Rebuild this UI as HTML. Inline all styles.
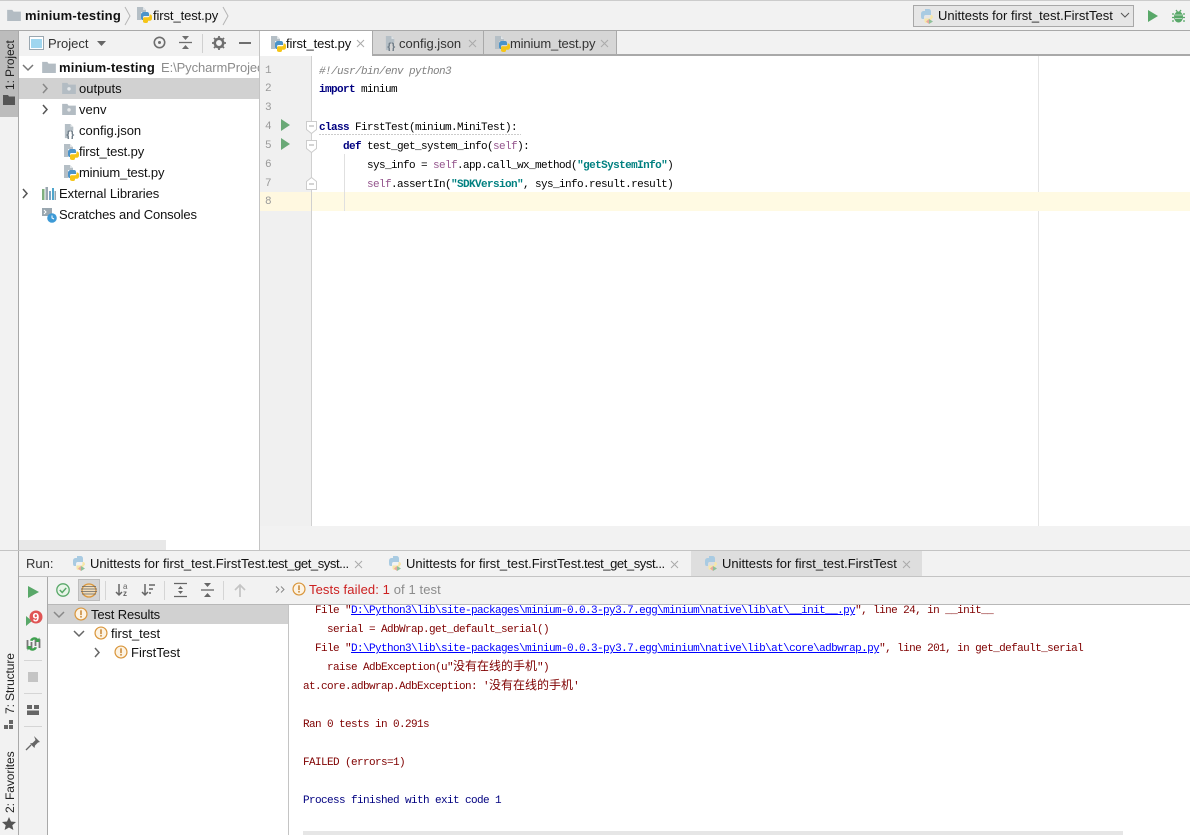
<!DOCTYPE html>
<html><head><meta charset="utf-8">
<style>
html,body{margin:0;padding:0;background:#fff}
#r{position:relative;width:1190px;height:835px;overflow:hidden;background:#fff;font-family:"Liberation Sans","Noto Sans CJK SC",sans-serif;font-size:13px;color:#111}
.b{position:absolute}
.t{position:absolute;white-space:pre;line-height:18px;height:18px}
.m{position:absolute;white-space:pre;font-family:"Liberation Mono",monospace;font-size:11px;letter-spacing:-.6px;line-height:19px;height:19px;color:#000}
.k{color:#000080;font-weight:bold}.s{color:#008080;font-weight:bold}.f{color:#94558d}.c{color:#808080;font-style:italic}
.r{color:#7f0000}.l{color:#0000ff;text-decoration:underline}.n{color:#000080}
.z{font-family:"Noto Sans CJK SC",sans-serif;font-size:12px;letter-spacing:0;line-height:0}
.g{position:absolute;left:265px;width:16px;text-align:left;font-family:"Liberation Mono",monospace;font-size:11px;color:#999;line-height:14px}
svg{position:absolute;overflow:visible}
.v{position:absolute;white-space:pre;transform-origin:0 0;transform:rotate(-90deg);line-height:14px;font-size:12px;letter-spacing:-.1px;color:#222}
.nar{letter-spacing:-.42px}
</style></head><body><div id="r">
<svg width="0" height="0" style="position:absolute"><defs>
<symbol id="py" viewBox="0 0 16 16"><path d="M1 0h6l3 3v2H5v8H1z" fill="#b5bfc6"/><path d="M7 0v3h3z" fill="#dfe4e7"/><path d="M5 8c0-2 1.200-3 3-3h3c1.500 0 2 1 2 2v2H8.500C7.500 9 7 9.500 7 10.500V13H6.500C5.500 13 5 12 5 11z" fill="#4b93c9"/><path d="M13.500 7.500h.7c1.100 0 1.800 1 1.800 2.300V11.500c0 1.500-1 2.200-2.200 2.200H12v1c0 .8-1 1.300-2.500 1.300S7 15.500 7 14.500V11.800c0-.9.600-1.500 1.500-1.500H12c1 0 1.500-.6 1.500-1.500z" fill="#f5c518"/></symbol>
<symbol id="pf" viewBox="0 0 16 16"><path d="M2 6c0-2 1-3 3-3h1V1h3.500c1.500 0 2.500 1 2.500 2.500V7H6.500C5.500 7 5 8 5 9v2H3.500C2.500 11 2 10 2 8.500z" fill="#a9cbe2"/><path d="M14 9.500c0-1.200-.5-2.500-2-2.500h-.5v2c0 1-.8 1.500-1.500 1.500H5.500V13c0 1.500 1 2 2.500 2h1.500" fill="#f7e7a8"/><path d="M10 11l4 2.500-4 2.500z" fill="#8fc09a"/><path d="M10 11l-3 2.500 3 2.500z" fill="#e8a8a0"/></symbol>
<symbol id="json" viewBox="0 0 16 16"><path d="M2 0h6l3 3v4H6v8H2z" fill="#b5bfc6"/><path d="M8 0v3h3z" fill="#dfe4e7"/><text x="3.500" y="15" font-family="Liberation Sans" font-size="11" fill="#6d7a85" font-weight="bold">{}</text></symbol>
<symbol id="ex" viewBox="0 0 16 16"><circle cx="8" cy="8" r="6.800" fill="#fdf3e3" stroke="#d9963c" stroke-width="1.400"/><rect x="7.100" y="3.800" width="1.800" height="5.500" fill="#c98a3a"/><rect x="7.100" y="10.300" width="1.800" height="1.800" fill="#c98a3a"/></symbol>
<symbol id="fold" viewBox="0 0 16 14"><path d="M0 1h6l1.500 2H16v11H0z" fill="#b3bcc3"/></symbol>
<symbol id="foldd" viewBox="0 0 16 14"><path d="M0 1h6l1.500 2H16v11H0z" fill="#b3bcc3"/><circle cx="8" cy="8" r="2" fill="#e6e9eb"/></symbol>
</defs></svg>

<!-- top bar -->
<div class="b" style="left:0;top:0;width:1190px;height:30px;background:#f2f2f2;border-top:1px solid #ccc;box-sizing:border-box"></div>
<div class="b" style="left:0;top:30px;width:1190px;height:1px;background:#a9a9a9"></div>
<svg style="left:7px;top:9px" width="14" height="12"><use href="#fold" width="14" height="12"/></svg>
<div class="t" style="left:25px;top:7px;font-weight:bold;letter-spacing:.2px">minium-testing</div>
<svg style="left:124px;top:5px" width="8" height="22"><path d="M1 2l5 9-5 9" fill="none" stroke="#b5b5b5"/></svg>
<svg style="left:136px;top:7px" width="16" height="16"><use href="#py" width="16" height="16"/></svg>
<div class="t" style="left:153px;top:7px;letter-spacing:-.1px">first_test.py</div>
<svg style="left:222px;top:5px" width="8" height="22"><path d="M1 2l5 9-5 9" fill="none" stroke="#b5b5b5"/></svg>
<div class="b" style="left:913px;top:5px;width:221px;height:22px;background:#e6e6e6;border:1px solid #a8a8a8;box-sizing:border-box"></div>
<svg style="left:919px;top:8px" width="16" height="16"><use href="#pf" width="16" height="16"/></svg>
<div class="t" style="left:938px;top:7px">Unittests for first_test.FirstTest</div>
<svg style="left:1120px;top:12px" width="10" height="7"><path d="M1 1l4 4 4-4" fill="none" stroke="#555"/></svg>
<svg style="left:1147px;top:10px" width="12" height="12"><path d="M1 0l10 6-10 6z" fill="#59a869"/></svg>
<svg style="left:1172px;top:9px" width="13" height="14"><ellipse cx="6.500" cy="8" rx="4.500" ry="5.500" fill="#59a869"/><path d="M0 5h2M11 5h2M0 8.500h2M11 8.500h2M0 12h2M11 12h2M4 1l1.500 2M9 1L7.500 3" stroke="#59a869" stroke-width="1.300"/><path d="M3 6h7M3 9.500h7" stroke="#cfe5d4" stroke-width=".8"/></svg>

<!-- left stripe -->
<div class="b" style="left:0;top:31px;width:18px;height:804px;background:#f2f2f2"></div>
<div class="b" style="left:18px;top:31px;width:1px;height:804px;background:#a9a9a9"></div>
<div class="b" style="left:0;top:31px;width:18px;height:86px;background:#bcbcbc"></div>
<div class="v" style="left:3px;top:90px">1: Project</div>
<svg style="left:3px;top:95px" width="12" height="10"><path d="M0 0h5l1 1.500h6V10H0z" fill="#555"/></svg>
<div class="v" style="left:3px;top:714px">7: Structure</div>
<svg style="left:4px;top:720px" width="10" height="10"><path d="M0 5h4v4H0zM5 5h4v4H5zM5 0h4v4H5z" fill="#666"/></svg>
<div class="v" style="left:3px;top:813px">2: Favorites</div>
<svg style="left:2px;top:817px" width="14" height="13"><path d="M7 0l2 4.500 5 .5-3.700 3.200 1.100 4.800L7 10.500 2.600 13l1.100-4.800L0 5l5-.5z" fill="#555"/></svg>

<!-- project panel -->
<div class="b" style="left:19px;top:31px;width:240px;height:25px;background:#f2f2f2"></div>
<svg style="left:29px;top:36px" width="15" height="14"><rect x=".5" y=".5" width="14" height="13" fill="#fff" stroke="#9aa7b0"/><rect x="2" y="3" width="11" height="9" fill="#9fd6ef"/></svg>
<div class="t" style="left:48px;top:35px;color:#333">Project</div>
<svg style="left:97px;top:41px" width="9" height="5"><path d="M0 0h9L4.500 5z" fill="#666"/></svg>
<svg style="left:153px;top:36px" width="13" height="13"><circle cx="6.500" cy="6.500" r="5.200" fill="none" stroke="#6e6e6e" stroke-width="1.600"/><circle cx="6.500" cy="6.500" r="1.500" fill="#6e6e6e"/></svg>
<svg style="left:179px;top:36px" width="13" height="13"><path d="M0 6.500h13" stroke="#6e6e6e" stroke-width="1.300"/><path d="M3 0h7L6.500 4zM3 13h7L6.500 9z" fill="#6e6e6e"/></svg>
<div class="b" style="left:202px;top:34px;width:1px;height:19px;background:#d0d0d0"></div>
<svg style="left:212px;top:36px" width="14" height="14"><circle cx="7" cy="7" r="4.200" fill="none" stroke="#6e6e6e" stroke-width="2.500"/><path d="M7 0v3M7 11v3M0 7h3M11 7h3M2 2l2 2M10 10l2 2M12 2l-2 2M2 12l2-2" stroke="#6e6e6e" stroke-width="1.800"/></svg>
<div class="b" style="left:239px;top:42px;width:12px;height:2px;background:#6e6e6e"></div>

<div class="b" style="left:19px;top:78px;width:240px;height:21px;background:#d1d1d1"></div>
<svg style="left:22px;top:64px" width="12" height="8"><path d="M1 1l5 5 5-5" fill="none" stroke="#777" stroke-width="1.500"/></svg>
<svg style="left:42px;top:61px" width="14" height="12"><use href="#fold" width="14" height="12"/></svg>
<div class="t" style="left:59px;top:59px;font-weight:bold;letter-spacing:.2px">minium-testing</div>
<div class="t" style="left:161px;top:59px;width:98px;overflow:hidden;color:#8c8c8c;letter-spacing:-.1px">E:\PycharmProjects\minium</div>
<svg style="left:42px;top:83px" width="7" height="11"><path d="M1 1l4 4.500-4 4.500" fill="none" stroke="#888" stroke-width="1.500"/></svg>
<svg style="left:62px;top:82px" width="14" height="12"><use href="#foldd" width="14" height="12"/></svg>
<div class="t" style="left:79px;top:80px">outputs</div>
<svg style="left:42px;top:104px" width="7" height="11"><path d="M1 1l4 4.500-4 4.500" fill="none" stroke="#555" stroke-width="1.500"/></svg>
<svg style="left:62px;top:103px" width="14" height="12"><use href="#foldd" width="14" height="12"/></svg>
<div class="t" style="left:79px;top:101px">venv</div>
<svg style="left:63px;top:124px" width="15" height="15"><use href="#json" width="15" height="15"/></svg>
<div class="t" style="left:79px;top:122px">config.json</div>
<svg style="left:63px;top:144px" width="16" height="16"><use href="#py" width="16" height="16"/></svg>
<div class="t" style="left:79px;top:143px;letter-spacing:-.1px">first_test.py</div>
<svg style="left:63px;top:165px" width="16" height="16"><use href="#py" width="16" height="16"/></svg>
<div class="t" style="left:79px;top:164px;letter-spacing:-.15px">minium_test.py</div>
<svg style="left:22px;top:188px" width="7" height="11"><path d="M1 1l4 4.500-4 4.500" fill="none" stroke="#555" stroke-width="1.500"/></svg>
<svg style="left:42px;top:187px" width="14" height="13"><path d="M0 2h2.500v11H0z" fill="#7fb07f"/><path d="M3.500 0H6v13H3.500z" fill="#9aa7b0"/><path d="M7 4h2v9H7z" fill="#7ca5c4"/><path d="M10 1h2v12h-2z" fill="#4fa5cc"/><path d="M12.500 4H14v9h-1.500z" fill="#9aa7b0"/></svg>
<div class="t" style="left:59px;top:185px;letter-spacing:-.05px">External Libraries</div>
<svg style="left:42px;top:207px" width="16" height="16"><path d="M0 1h10v8H0z" fill="#9aa7b0"/><path d="M2 3l2 2-2 2" stroke="#fff" fill="none"/><circle cx="10" cy="11" r="4.800" fill="#3d9ad6"/><path d="M10 8.500V11l2 1" stroke="#fff" fill="none"/></svg>
<div class="t" style="left:59px;top:206px;letter-spacing:-.14px">Scratches and Consoles</div>
<div class="b" style="left:19px;top:540px;width:147px;height:10px;background:#e8e8e8"></div>
<div class="b" style="left:259px;top:31px;width:1px;height:520px;background:#c4c4c4"></div>

<!-- editor tabs -->
<div class="b" style="left:260px;top:31px;width:930px;height:23px;background:#f2f2f2"></div>
<div class="b" style="left:260px;top:54px;width:930px;height:2px;background:#a9a9a9"></div>
<div class="b" style="left:260px;top:31px;width:112px;height:25px;background:#fff"></div>
<div class="b" style="left:373px;top:31px;width:110px;height:23px;background:#d6d6d6"></div>
<div class="b" style="left:484px;top:31px;width:132px;height:23px;background:#d6d6d6"></div>
<div class="b" style="left:372px;top:31px;width:1px;height:24px;background:#a9a9a9"></div>
<div class="b" style="left:483px;top:31px;width:1px;height:23px;background:#a9a9a9"></div>
<div class="b" style="left:616px;top:31px;width:1px;height:23px;background:#a9a9a9"></div>
<svg style="left:270px;top:36px" width="16" height="16"><use href="#py" width="16" height="16"/></svg>
<div class="t" style="left:286px;top:35px;letter-spacing:-.1px">first_test.py</div>
<svg style="left:356px;top:39px" width="9" height="9"><path d="M1 1l7 7M8 1l-7 7" stroke="#aaa"/></svg>
<svg style="left:384px;top:36px" width="15" height="15"><use href="#json" width="15" height="15"/></svg>
<div class="t" style="left:399px;top:35px;color:#333">config.json</div>
<svg style="left:468px;top:39px" width="9" height="9"><path d="M1 1l7 7M8 1l-7 7" stroke="#aaa"/></svg>
<svg style="left:494px;top:36px" width="16" height="16"><use href="#py" width="16" height="16"/></svg>
<div class="t" style="left:510px;top:35px;color:#333;letter-spacing:-.15px">minium_test.py</div>
<svg style="left:600px;top:39px" width="9" height="9"><path d="M1 1l7 7M8 1l-7 7" stroke="#aaa"/></svg>

<!-- editor -->
<div class="b" style="left:260px;top:56px;width:51px;height:470px;background:#f0f0f0"></div>
<div class="b" style="left:311px;top:56px;width:1px;height:470px;background:#d0d0d0"></div>
<div class="b" style="left:1038px;top:56px;width:1px;height:470px;background:#e4e4e4"></div>
<div class="b" style="left:260px;top:192px;width:51px;height:19px;background:#fff8e0"></div>
<div class="b" style="left:312px;top:192px;width:878px;height:19px;background:#fffae3"></div>
<div class="b" style="left:344px;top:154px;width:1px;height:57px;background:#e0e0e0"></div>
<div class="g" style="top:64px">1</div><div class="g" style="top:82px">2</div><div class="g" style="top:101px">3</div><div class="g" style="top:120px">4</div><div class="g" style="top:139px">5</div><div class="g" style="top:158px">6</div><div class="g" style="top:177px">7</div><div class="g" style="top:195px">8</div>
<svg style="left:281px;top:119px" width="9" height="12"><path d="M0 0l9 6-9 6z" fill="#6aa977"/></svg>
<svg style="left:281px;top:138px" width="9" height="12"><path d="M0 0l9 6-9 6z" fill="#6aa977"/></svg>
<svg style="left:306px;top:121px" width="11" height="13"><path d="M.5.5h10v8l-5 4-5-4z" fill="#fff" stroke="#ccc"/><path d="M3 5h5" stroke="#aaa"/></svg>
<svg style="left:306px;top:140px" width="11" height="13"><path d="M.5.5h10v8l-5 4-5-4z" fill="#fff" stroke="#ccc"/><path d="M3 5h5" stroke="#aaa"/></svg>
<svg style="left:306px;top:177px" width="11" height="13"><path d="M.5 12.500h10v-8l-5-4-5 4z" fill="#fff" stroke="#ccc"/><path d="M3 7h5" stroke="#aaa"/></svg>
<svg style="left:319px;top:133px" width="202" height="3"><path d="M0 1.500H202" stroke="#ccc" stroke-dasharray="2 1"/></svg>
<div class="m c" style="left:319px;top:63px">#!/usr/bin/env python3</div>
<div class="m" style="left:319px;top:81px"><span class="k">import</span> minium</div>
<div class="m" style="left:319px;top:119px"><span class="k">class</span> FirstTest(minium.MiniTest):</div>
<div class="m" style="left:343px;top:138px"><span class="k">def</span> test_get_system_info(<span class="f">self</span>):</div>
<div class="m" style="left:367px;top:157px">sys_info = <span class="f">self</span>.app.call_wx_method(<span class="s">"getSystemInfo"</span>)</div>
<div class="m" style="left:367px;top:176px"><span class="f">self</span>.assertIn(<span class="s">"SDKVersion"</span>, sys_info.result.result)</div>

<!-- strip -->
<div class="b" style="left:260px;top:526px;width:930px;height:24px;background:#f2f2f2"></div>
<div class="b" style="left:0;top:550px;width:1190px;height:1px;background:#c4c4c4"></div>

<!-- run tabs -->
<div class="b" style="left:19px;top:551px;width:1171px;height:25px;background:#f2f2f2"></div>
<div class="b" style="left:691px;top:551px;width:231px;height:25px;background:#dedede"></div>
<div class="b" style="left:19px;top:576px;width:1171px;height:1px;background:#c4c4c4"></div>
<div class="t" style="left:26px;top:555px;color:#333">Run:</div>
<svg style="left:71px;top:555px" width="16" height="16"><use href="#pf" width="16" height="16"/></svg>
<div class="t" style="left:90px;top:555px">Unittests for first_test.FirstTest<span class="nar">.test_get_syst...</span></div>
<svg style="left:354px;top:560px" width="9" height="9"><path d="M1 1l7 7M8 1l-7 7" stroke="#aaa"/></svg>
<svg style="left:387px;top:555px" width="16" height="16"><use href="#pf" width="16" height="16"/></svg>
<div class="t" style="left:406px;top:555px">Unittests for first_test.FirstTest<span class="nar">.test_get_syst...</span></div>
<svg style="left:670px;top:560px" width="9" height="9"><path d="M1 1l7 7M8 1l-7 7" stroke="#aaa"/></svg>
<svg style="left:703px;top:555px" width="16" height="16"><use href="#pf" width="16" height="16"/></svg>
<div class="t" style="left:722px;top:555px">Unittests for first_test.FirstTest</div>
<svg style="left:902px;top:560px" width="9" height="9"><path d="M1 1l7 7M8 1l-7 7" stroke="#aaa"/></svg>

<!-- run left toolbar -->
<div class="b" style="left:19px;top:577px;width:28px;height:258px;background:#f2f2f2"></div>
<div class="b" style="left:47px;top:577px;width:1px;height:258px;background:#a9a9a9"></div>
<svg style="left:28px;top:586px" width="11" height="12"><path d="M0 0l11 6-11 6z" fill="#59a869"/></svg>
<svg style="left:26px;top:611px" width="16" height="16"><path d="M0 5l6 5-6 5z" fill="#59a869"/><circle cx="10" cy="6" r="6.500" fill="#e05555"/><text x="6.500" y="10.500" font-family="Liberation Sans" font-size="12" font-weight="bold" fill="#fff">9</text></svg>
<svg style="left:26px;top:636px" width="15" height="16"><path d="M1.500 4v8h4V6M13.500 12V4h-4v6" fill="none" stroke="#777" stroke-width="1.800"/><path d="M4 4.500C5 1 10 0 12 3l1.500-1.500V6H9l1.500-1.500C9 3 7 3.500 6.500 5z" fill="#3fa14f"/><path d="M11 11.500C10 15 5 16 3 13l-1.500 1.500V10H6l-1.500 1.500C6 13 8 12.500 8.500 11z" fill="#3fa14f"/></svg>
<div class="b" style="left:24px;top:660px;width:18px;height:1px;background:#d5d5d5"></div>
<div class="b" style="left:28px;top:672px;width:10px;height:10px;background:#c4c4c4"></div>
<div class="b" style="left:24px;top:693px;width:18px;height:1px;background:#d5d5d5"></div>
<svg style="left:27px;top:705px" width="12" height="10"><path d="M0 0h5v4H0zM7 0h5v4H7zM0 5.500h12V10H0z" fill="#666"/></svg>
<div class="b" style="left:24px;top:726px;width:18px;height:1px;background:#d5d5d5"></div>
<svg style="left:26px;top:736px" width="14" height="14"><path d="M8 0l6 6-2 .5-3 3-.5 2.500L4 7.500l2.500-.5 3-3z" fill="#666"/><path d="M5 9L0 14" stroke="#666" stroke-width="1.300"/></svg>

<!-- top toolbar -->
<div class="b" style="left:48px;top:577px;width:1142px;height:27px;background:#f2f2f2"></div>
<div class="b" style="left:48px;top:604px;width:1142px;height:1px;background:#b8b8b8"></div>
<svg style="left:56px;top:583px" width="14" height="14"><circle cx="7" cy="7" r="6.200" fill="#e8f4e8" stroke="#59a869" stroke-width="1.300"/><path d="M3.800 7l2.400 2.500 4-4.500" fill="none" stroke="#59a869" stroke-width="1.500"/></svg>
<div class="b" style="left:78px;top:579px;width:22px;height:22px;background:#d4d4d4;border:1px solid #bdbdbd;box-sizing:border-box"></div>
<svg style="left:81px;top:583px" width="16" height="15"><ellipse cx="8" cy="7.500" rx="7" ry="6.500" fill="#f1dcb9" stroke="#d9963c" stroke-width="1.300"/><path d="M1 3.500h14M0 6h16M0 8.500h16M1 11h14" stroke="#666" stroke-width=".8"/></svg>
<div class="b" style="left:105px;top:581px;width:1px;height:19px;background:#d5d5d5"></div>
<svg style="left:115px;top:582px" width="14" height="15"><path d="M4 2v11M1 10l3 3 3-3" fill="none" stroke="#666" stroke-width="1.500"/><text x="8" y="7" font-family="Liberation Sans" font-size="8" fill="#666">a</text><text x="8" y="14" font-family="Liberation Sans" font-size="8" font-weight="bold" fill="#666">z</text></svg>
<svg style="left:141px;top:582px" width="15" height="15"><path d="M4 2v11M1 10l3 3 3-3" fill="none" stroke="#666" stroke-width="1.500"/><path d="M8 3h6M8 7h4M8 11h2" stroke="#666" stroke-width="1.500"/></svg>
<div class="b" style="left:164px;top:581px;width:1px;height:19px;background:#d5d5d5"></div>
<svg style="left:174px;top:583px" width="13" height="14"><path d="M0 .5h13M0 13.500h13" stroke="#666" stroke-width="1.300"/><path d="M6.500 3l2.500 3H4zM6.500 11L4 8h5z" fill="#666"/></svg>
<svg style="left:201px;top:583px" width="13" height="14"><path d="M0 7h13" stroke="#666" stroke-width="1.300"/><path d="M3 0h7L6.500 4zM3 14h7L6.500 10z" fill="#666"/></svg>
<div class="b" style="left:223px;top:581px;width:1px;height:19px;background:#d5d5d5"></div>
<svg style="left:234px;top:583px" width="12" height="14"><path d="M6 14V2M1 7l5-5 5 5" fill="none" stroke="#c4c4c4" stroke-width="1.700"/></svg>
<svg style="left:276px;top:586px" width="9" height="7"><path d="M0 .5l3 3-3 3M5 .5l3 3-3 3" fill="none" stroke="#888"/></svg>
<svg style="left:292px;top:582px" width="14" height="14"><use href="#ex" width="14" height="14"/></svg>
<div class="t" style="left:309px;top:581px;color:#cc2020;letter-spacing:.1px">Tests failed: 1 <span style="color:#8c8c8c">of 1 test</span></div>

<!-- test tree -->
<div class="b" style="left:48px;top:605px;width:240px;height:19px;background:#d1d1d1"></div>
<div class="b" style="left:288px;top:605px;width:1px;height:230px;background:#c4c4c4"></div>
<svg style="left:53px;top:611px" width="12" height="8"><path d="M1 1l5 5 5-5" fill="none" stroke="#888" stroke-width="1.500"/></svg>
<svg style="left:74px;top:607px" width="14" height="14"><use href="#ex" width="14" height="14"/></svg>
<div class="t" style="left:91px;top:606px;letter-spacing:-.15px">Test Results</div>
<svg style="left:73px;top:630px" width="12" height="8"><path d="M1 1l5 5 5-5" fill="none" stroke="#666" stroke-width="1.500"/></svg>
<svg style="left:94px;top:626px" width="14" height="14"><use href="#ex" width="14" height="14"/></svg>
<div class="t" style="left:111px;top:625px">first_test</div>
<svg style="left:94px;top:647px" width="7" height="11"><path d="M1 1l4 4.500-4 4.500" fill="none" stroke="#666" stroke-width="1.500"/></svg>
<svg style="left:114px;top:645px" width="14" height="14"><use href="#ex" width="14" height="14"/></svg>
<div class="t" style="left:131px;top:644px">FirstTest</div>

<!-- console -->
<div class="m r" style="left:315px;top:602px">File "<span class="l">D:\Python3\lib\site-packages\minium-0.0.3-py3.7.egg\minium\native\lib\at\__init__.py</span>", line 24, in __init__</div>
<div class="m r" style="left:327px;top:621px">serial = AdbWrap.get_default_serial()</div>
<div class="m r" style="left:315px;top:640px">File "<span class="l">D:\Python3\lib\site-packages\minium-0.0.3-py3.7.egg\minium\native\lib\at\core\adbwrap.py</span>", line 201, in get_default_serial</div>
<div class="m r" style="left:327px;top:659px">raise AdbException(u"<span class="z">没有在线的手机</span>")</div>
<div class="m r" style="left:303px;top:678px">at.core.adbwrap.AdbException: '<span class="z">没有在线的手机</span>'</div>
<div class="m r" style="left:303px;top:716px">Ran 0 tests in 0.291s</div>
<div class="m r" style="left:303px;top:754px">FAILED (errors=1)</div>
<div class="m n" style="left:303px;top:792px">Process finished with exit code 1</div>
<div class="b" style="left:303px;top:831px;width:820px;height:4px;background:#e6e6e6"></div>
</div></body></html>
